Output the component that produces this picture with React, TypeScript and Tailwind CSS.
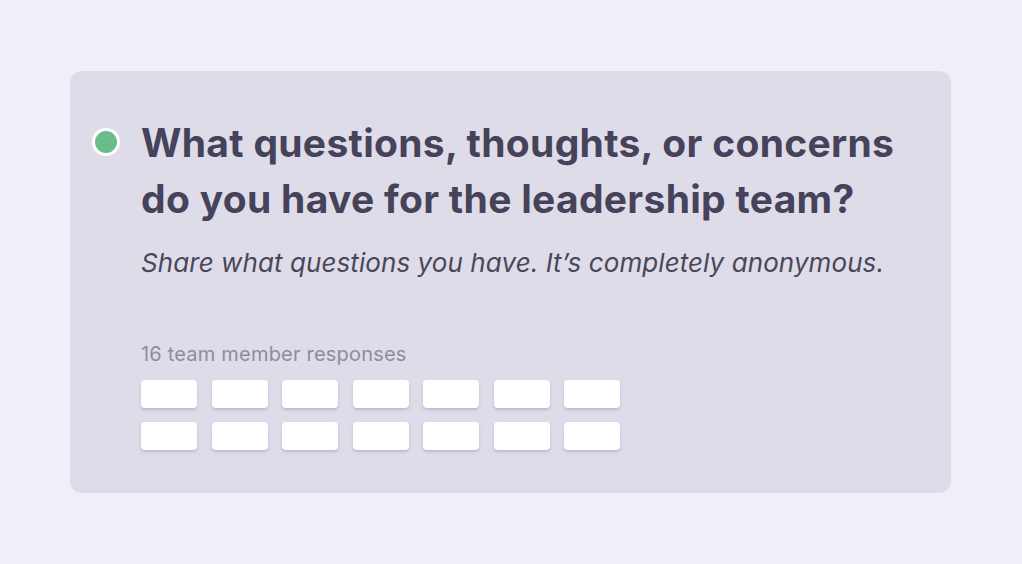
export default function App() {
  const boxes = Array.from({ length: 14 });

  return (
    <div className="w-[1022px] h-[564px] bg-[#f0eef9] pt-[71px] pl-[70px] font-['Inter',sans-serif]">
      <div className="w-[881px] h-[422px] rounded-xl bg-[#dfdcea] flex pl-[22px] pt-[44px]">
        <div className="w-[49px] shrink-0 pt-[13px]">
          <div className="w-[28px] h-[28px] rounded-full bg-[#68bd8a] border-[3px] border-white" />
        </div>
        <div className="flex flex-col">
          <h1 className="text-[39px] leading-[56px] font-bold text-[#45425a] tracking-[0.3px]">
            What questions, thoughts, or concerns
            <br />
            do you have for the leadership team?
          </h1>
          <p className="mt-[19px] text-[26px] leading-[34px] italic text-[#4a4759] tracking-[0.08px]">
            Share what questions you have. It’s completely anonymous.
          </p>
          <p className="mt-[62px] text-[20px] leading-[24px] text-[#8f8ba2] tracking-[0.2px]">16 team member responses</p>
          <div className="mt-[14px] grid grid-cols-[repeat(7,56px)] gap-x-[14.5px] gap-y-[14px]">
            {boxes.map((_, i) => (
              <div key={i} className="h-[28px] rounded-[4px] bg-white shadow-[0_2px_3px_rgba(90,80,130,0.25)]" />
            ))}
          </div>
        </div>
      </div>
    </div>
  );
}
